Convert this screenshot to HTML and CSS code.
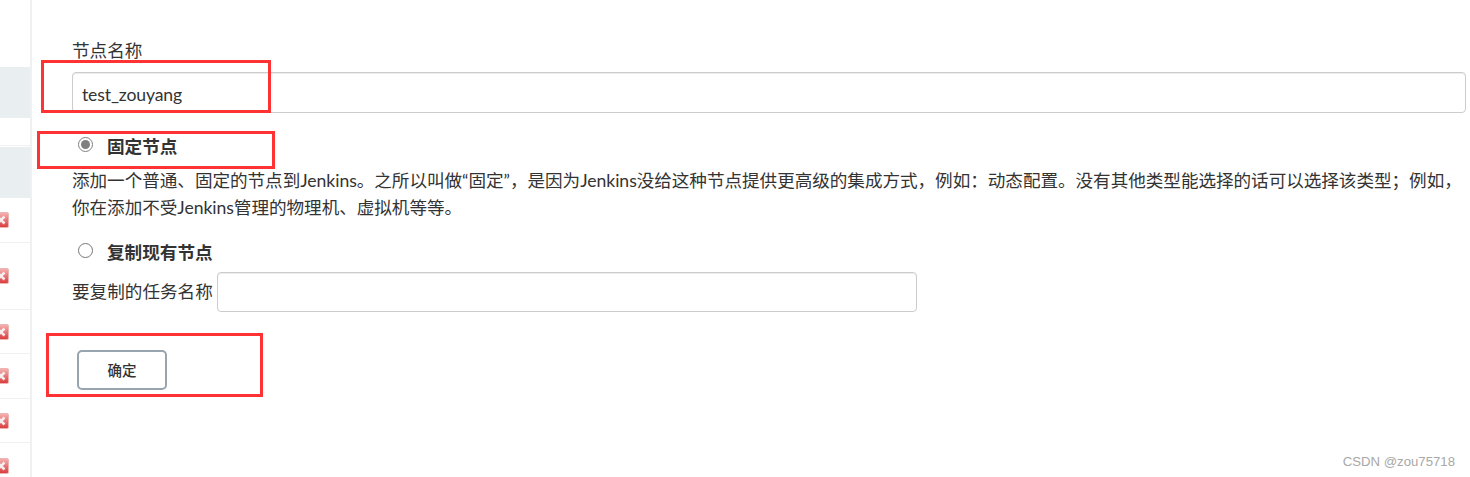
FILE: index.html
```html
<!DOCTYPE html>
<html lang="zh-CN">
<head>
<meta charset="utf-8">
<title>新建节点</title>
<link rel="stylesheet" href="styles.css">
</head>
<body>
<div class="page">
  <aside class="sidebar">
    <div class="side-row h67"></div>
    <div class="side-row h51 shaded"></div>
    <div class="side-row h28 lined"></div>
    <div class="side-row h51 shaded"></div>
    <div class="side-row h45 lined"><svg class="x-icon" viewBox="0 0 16 16"><use href="#err"/></svg></div>
    <div class="side-row h67 lined"><svg class="x-icon" viewBox="0 0 16 16"><use href="#err"/></svg></div>
    <div class="side-row h44 lined"><svg class="x-icon" viewBox="0 0 16 16"><use href="#err"/></svg></div>
    <div class="side-row h45 lined"><svg class="x-icon" viewBox="0 0 16 16"><use href="#err"/></svg></div>
    <div class="side-row h44 lined"><svg class="x-icon" viewBox="0 0 16 16"><use href="#err"/></svg></div>
    <div class="side-row h45"><svg class="x-icon" viewBox="0 0 16 16"><use href="#err"/></svg></div>
  </aside>
  <main class="content">
    <label class="field-label" for="name">节点名称</label>
    <input class="text-input" id="name" type="text" value="test_zouyang">
    <label class="radio-row first"><input type="radio" name="mode" checked><b>固定节点</b></label>
    <p class="desc">添加一个普通、固定的节点到Jenkins。之所以叫做“固定”，是因为Jenkins没给这种节点提供更高级的集成方式，例如：动态配置。没有其他类型能选择的话可以选择该类型；例如，你在添加不受Jenkins管理的物理机、虚拟机等等。</p>
    <label class="radio-row second"><input type="radio" name="mode"><b>复制现有节点</b></label>
    <div class="copy-row">
      <label class="copy-label" for="copy">要复制的任务名称</label>
      <input class="copy-input" id="copy" type="text">
    </div>
    <button class="ok" type="button">确定</button>
  </main>
  <div class="mark mark-name"></div>
  <div class="mark mark-radio"></div>
  <div class="mark mark-ok"></div>
  <div class="watermark">CSDN @zou75718</div>
</div>
<svg class="defs" width="0" height="0">
  <defs>
    <linearGradient id="errg" x1="0" y1="0" x2="0" y2="1">
      <stop offset="0" stop-color="#f4b4b4"/>
      <stop offset="1" stop-color="#d83a3a"/>
    </linearGradient>
    <symbol id="err" viewBox="0 0 16 16">
      <rect x="0.5" y="0.5" width="15" height="15" rx="1.5" fill="url(#errg)" stroke="#eeb4b4"/>
      <path d="M4.5 4.5l7 7M11.5 4.5l-7 7" stroke="#f6eeee" stroke-width="2.6"/>
    </symbol>
  </defs>
</svg>
</body>
</html>
```
FILE: styles.css
```css
* { box-sizing: border-box; }
html, body { margin: 0; padding: 0; background: #fff; }
body {
  font-family: "Lato", "Noto Sans CJK SC", sans-serif;
  font-size: 17.6px;
  color: #333;
}
.page { position: relative; display: flex; width: 1470px; height: 477px; overflow: hidden; }
.sidebar {
  flex: 0 0 32px;
  height: 477px;
  overflow: hidden;
  border-right: 2px solid #eef0f2;
}
.side-row { display: flex; align-items: center; justify-content: flex-end; padding-right: 21px; }
.shaded { background: #e9eef1; }
.lined { border-bottom: 1px solid #eef0f2; }
.h67 { height: 67px; }
.h51 { height: 51px; }
.h28 { height: 28px; margin-bottom: 1px; }
.h44 { height: 44px; }
.h45 { height: 45px; }
.x-icon { flex: 0 0 16px; width: 16px; height: 16px; }
.content {
  flex: 1;
  display: flex;
  flex-direction: column;
  align-items: flex-start;
  padding: 39px 4px 0 40px;
}
.field-label { line-height: 24px; height: 33px; }
.text-input, .copy-input {
  font: inherit;
  color: #333;
  background: #fff;
  border: 1px solid #ccc;
  border-radius: 4px;
  box-shadow: inset 0 1px 1px rgba(0, 0, 0, .075);
  outline: none;
}
.text-input { width: 100%; height: 41px; padding: 3px 9px 0; letter-spacing: -0.15px; }
.radio-row { display: flex; align-items: center; height: 24px; font-weight: 700; }
.radio-row input {
  width: 15px;
  height: 15px;
  margin: 0 14px 2px 6px;
  accent-color: #808080;
}
.radio-row b { font-weight: 700; }
.radio-row.first { margin-top: 20px; }
.radio-row.second { margin-top: 18px; }
.desc { margin: 10px 0 0; line-height: 27px; width: 100%; letter-spacing: -0.04px; }
.copy-row { display: flex; align-items: center; margin-top: 9px; gap: 4px; }
.copy-label { padding-bottom: 4px; }
.copy-input { width: 700px; height: 40px; padding: 0 9px; }
.ok {
  width: 90px;
  height: 40px;
  margin: 38px 0 0 5px;
  padding: 0 0 2px;
  font: inherit;
  font-size: 14.5px;
  font-weight: 500;
  color: #333;
  background: #fff;
  border: 2px solid #98a4ae;
  border-radius: 5px;
}
.mark { position: absolute; border: 3px solid #ff3333; pointer-events: none; }
.mark-name { left: 41px; top: 60px; width: 230px; height: 53px; }
.mark-radio { left: 37px; top: 131px; width: 238px; height: 38px; }
.mark-ok { left: 46px; top: 333px; width: 217px; height: 64px; }
.watermark {
  position: absolute;
  right: 15px;
  top: 454px;
  font-family: "Liberation Sans", sans-serif;
  font-size: 13.2px;
  line-height: 16px;
  color: #a8a8a8;
}
.defs { position: absolute; }
```
